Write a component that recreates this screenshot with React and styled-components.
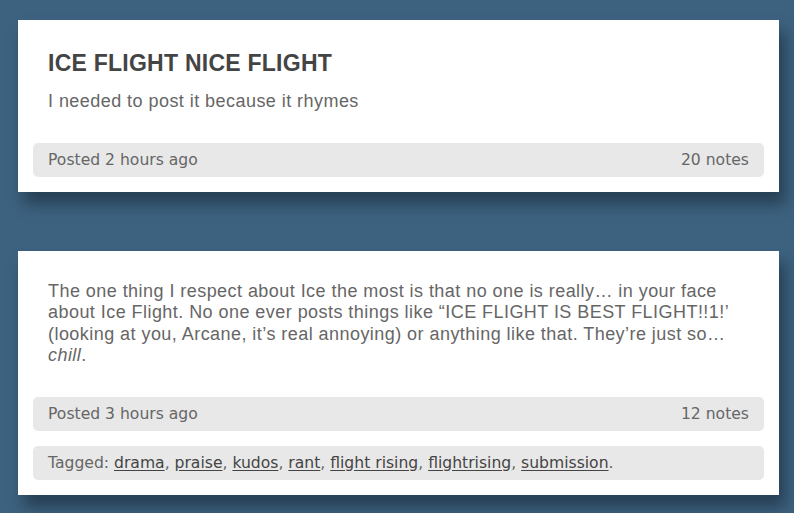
import styled, { createGlobalStyle } from 'styled-components';

const GlobalStyle = createGlobalStyle`
  html, body {
    margin: 0;
    padding: 0;
    background: #3d627f;
  }
`;

const Page = styled.div`
  width: 794px;
  height: 513px;
  overflow: hidden;
  padding: 20px 0 0 18px;
  box-sizing: border-box;
  display: flex;
  flex-direction: column;
  gap: 59px;
`;

const Card = styled.article`
  width: 761px;
  background: #fff;
  box-shadow: 6px 12px 14px rgba(20, 35, 50, 0.55);
  padding-bottom: 15px;
  display: flex;
  flex-direction: column;
  gap: 15px;
`;

const Content = styled.div`
  padding: 30px 30px 15px;
  font-family: 'Liberation Sans', Arial, sans-serif;
`;

const Title = styled.h2`
  margin: 0 0 15px;
  font-size: 23px;
  letter-spacing: 0.25px;
  line-height: 26px;
  font-weight: bold;
  color: #444;
`;

const Text = styled.p`
  margin: 0;
  font-size: 18px;
  letter-spacing: 0.45px;
  line-height: 21.5px;
  color: #666;
  white-space: nowrap;
`;

const Bar = styled.div`
  margin: 0 15px;
  height: 34px;
  padding: 0 15px;
  border-radius: 5px;
  background: #e8e8e8;
  display: flex;
  align-items: center;
  justify-content: space-between;
  font-family: 'DejaVu Sans', 'Open Sans', sans-serif;
  font-size: 15.6px;
  color: #666;
`;

const Tag = styled.a`
  color: #444;
  text-decoration: underline;
  text-underline-offset: 2px;
`;

const tags = ['drama', 'praise', 'kudos', 'rant', 'flight rising', 'flightrising', 'submission'];

export default function App() {
  return (
    <>
      <GlobalStyle />
      <Page>
        <Card>
          <Content>
            <Title>ICE FLIGHT NICE FLIGHT</Title>
            <Text>I needed to post it because it rhymes</Text>
          </Content>
          <Bar>
            <span>Posted 2 hours ago</span>
            <span>20 notes</span>
          </Bar>
        </Card>
        <Card>
          <Content>
            <Text>
              The one thing I respect about Ice the most is that no one is really… in your face
              <br />
              about Ice Flight. No one ever posts things like “ICE FLIGHT IS BEST FLIGHT!!1!’
              <br />
              (looking at you, Arcane, it’s real annoying) or anything like that. They’re just so…
              <br />
              <em>chill</em>.
            </Text>
          </Content>
          <Bar>
            <span>Posted 3 hours ago</span>
            <span>12 notes</span>
          </Bar>
          <Bar>
            <span>
              Tagged:{' '}
              {tags.map((t, i) => (
                <span key={t}>
                  <Tag>{t}</Tag>
                  {i < tags.length - 1 ? ', ' : '.'}
                </span>
              ))}
            </span>
          </Bar>
        </Card>
      </Page>
    </>
  );
}
